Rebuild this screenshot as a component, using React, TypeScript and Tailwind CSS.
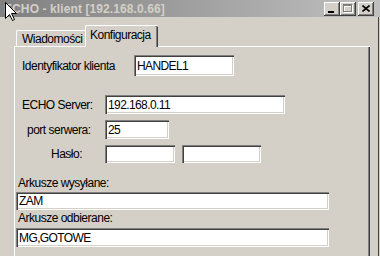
import React from 'react';

const bevelIn =
  'shadow-[inset_1px_1px_#808080,inset_2px_2px_#404040,inset_-1px_-1px_#ffffff,inset_-2px_-2px_#d4d0c8]';
const bevelOut =
  'shadow-[inset_-1px_-1px_#404040,inset_1px_1px_#ffffff,inset_-2px_-2px_#808080,inset_2px_2px_#d4d0c8]';

function Field({ value, className }: { value?: string; className: string }) {
  return (
    <input
      readOnly
      value={value ?? ''}
      className={`bg-white outline-none pl-[3px] text-[12px] tracking-[-0.6px] leading-none text-black ${bevelIn} ${className}`}
    />
  );
}

function TitleButton({ children }: { children: React.ReactNode }) {
  return (
    <div className={`w-[16px] h-[14px] bg-[#d4d0c8] relative ${bevelOut}`}>{children}</div>
  );
}

export default function App() {
  return (
    <div className="w-[380px] h-[256px] overflow-hidden bg-[#d4d0c8] relative flex flex-col font-['Liberation_Sans',Arial,sans-serif] whitespace-nowrap">
      {/* pasek tytułu (okno nieaktywne) */}
      <div className="h-[17px] shrink-0 flex items-center bg-linear-to-r from-[#808080] to-[#c0c0c0]">
        <span className="pl-[4px] text-[12px] font-bold leading-none text-[#d4d0c8] tracking-[0.1px]">
          ECHO - klient [192.168.0.66]
        </span>
        <div className="ml-auto mr-[6px] flex items-center">
          <TitleButton>
            <div className="absolute left-[4px] top-[9px] w-[6px] h-[2px] bg-black" />
          </TitleButton>
          <TitleButton>
            <div className="absolute left-[4px] top-[3px] w-[9px] h-[8px] border border-t-2 border-white" />
            <div className="absolute left-[3px] top-[2px] w-[9px] h-[8px] border border-t-2 border-[#808080]" />
          </TitleButton>
          <div className="w-[2px]" />
          <TitleButton>
            <svg className="absolute left-[4px] top-[3px]" width="8" height="7" viewBox="0 0 8 7">
              <path d="M0.5 0.5 L7.5 6.5 M7.5 0.5 L0.5 6.5" stroke="black" strokeWidth="1.6" />
            </svg>
          </TitleButton>
        </div>
      </div>

      {/* kursor myszy */}
      <svg className="absolute left-[5px] top-[2px]" width="13" height="20" viewBox="0 0 13 20">
        <path
          d="M0.5 0.5 L0.5 16.5 L4.5 12.5 L7.5 18.5 L9.5 17.5 L6.5 11.5 L11.5 11.5 Z"
          fill="white"
          stroke="black"
          strokeWidth="1"
        />
      </svg>

      <div className="flex-1 w-[379px] border-r border-[#404040] pl-[14px] pt-[8px] flex flex-col">
        {/* zakładki */}
        <div className="flex items-end pl-[2px] h-[21px] shrink-0 text-[12px] tracking-[-0.5px] leading-none text-black">
          <div className="w-[69px] h-[16px] border-l border-t border-white rounded-tl-[2px] flex items-center pl-[5px] pt-[1px]">
            Wiadomości
          </div>
          <div className="relative z-10 -mb-px w-[73px] h-[22px] bg-[#d4d0c8] border-l border-t border-white rounded-t-[2px] shadow-[inset_-1px_0_#404040,inset_-2px_0_#808080] flex items-center pl-[4px] pb-[3px]">
            Konfiguracja
          </div>
        </div>

        {/* panel Konfiguracja */}
        <div className="flex-1 w-[356px] border-l border-t border-white shadow-[inset_-1px_0_#404040,inset_-2px_0_#808080] flex flex-col text-[12px] tracking-[-0.5px] leading-none text-black">
          <div className="flex items-center mt-[8px] pl-[7px]">
            <span className="w-[112px]">Identyfikator klienta</span>
            <Field value="HANDEL1" className="w-[100px] h-[21px]" />
          </div>

          <div className="flex items-center mt-[19px] pl-[7px]">
            <span className="w-[83px]">ECHO Server:</span>
            <Field value="192.168.0.11" className="w-[180px] h-[19px]" />
          </div>

          <div className="flex items-center mt-[6px] pl-[7px]">
            <span className="w-[83px] pl-[5px]">port serwera:</span>
            <Field value="25" className="w-[64px] h-[19px]" />
          </div>

          <div className="flex items-center mt-[6px] pl-[7px]">
            <span className="w-[83px] pl-[29px]">Hasło:</span>
            <Field className="w-[70px] h-[18px]" />
            <Field className="w-[79px] h-[18px] ml-[7px]" />
          </div>

          <div className="mt-[13px] pl-[3px] h-[14px] flex items-center">Arkusze wysyłane:</div>
          <Field value="ZAM" className="mt-[2px] ml-[1px] w-[313px] h-[18px]" />

          <div className="mt-[1px] pl-[3px] h-[14px] flex items-center">Arkusze odbierane:</div>
          <Field value="MG,GOTOWE" className="mt-[3px] ml-[1px] w-[313px] h-[19px]" />
        </div>
      </div>
    </div>
  );
}
